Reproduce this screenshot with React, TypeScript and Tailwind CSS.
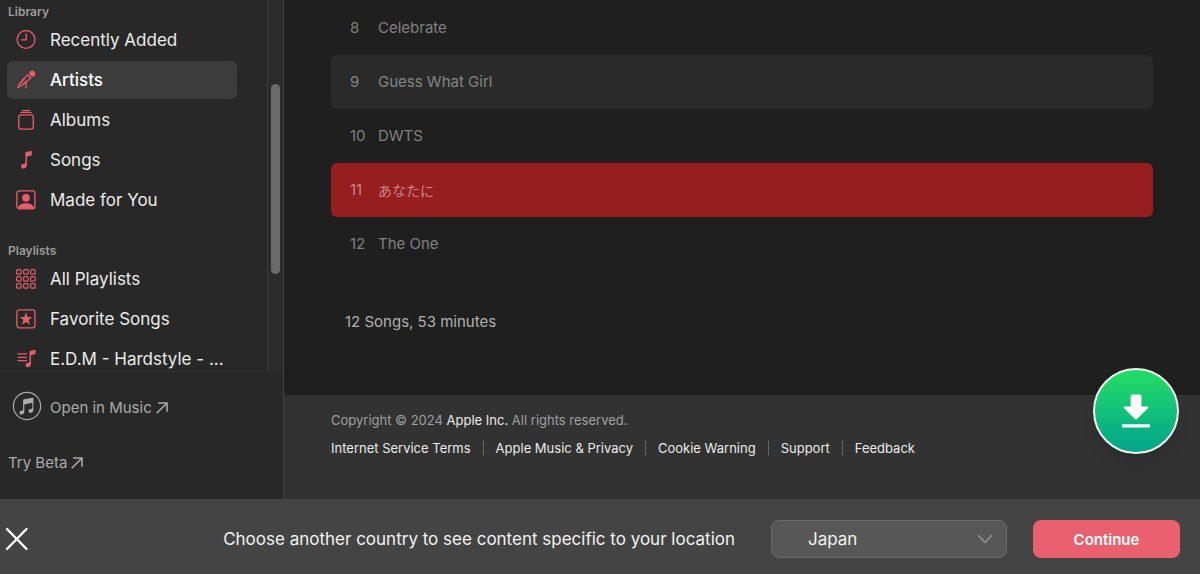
import type { ReactNode } from 'react';

interface NavItem {
  label: string;
  icon: ReactNode;
  active?: boolean;
}

interface Track {
  number: number;
  title: string;
  variant?: 'striped' | 'selected';
}

function ClockIcon() {
  return (
    <svg viewBox="0 0 20 20" className="size-5" fill="none" stroke="currentColor" strokeWidth="1.3">
      <circle cx="10" cy="9.5" r="8.9" />
      <path d="M10.2 3.8v6H5.4" strokeLinecap="round" strokeLinejoin="round" />
    </svg>
  );
}

function MicIcon() {
  return (
    <svg viewBox="0 0 20 20" className="size-5" fill="none" stroke="currentColor" strokeLinecap="round" strokeLinejoin="round">
      <path d="M11.300 4.900 3 14.600 1.900 17.500l2.900-1.200 10-8.200z" strokeWidth="1.200" />
      <path d="M10 11.500v6.300M10 11.500 7.500 13.800" strokeWidth="1.300" />
      <path d="m8 8.800-4.600 5.600" strokeWidth="1.600" />
      <path d="M12.200 3.900c.1 2.100 1.500 3.700 3.700 4l-1.300.9-3.300-3.400z" fill="currentColor" stroke="none" />
      <path d="M13.300 2.400a3.200 3.200 0 1 1 4 4.400c-2.300.3-4.300-1.900-4-4.400z" fill="currentColor" stroke="none" />
    </svg>
  );
}

function AlbumIcon() {
  return (
    <svg viewBox="0 0 20 20" className="size-5" fill="none" stroke="currentColor" strokeWidth="1.3" strokeLinecap="round">
      <rect x="2.7" y="4.900" width="14.6" height="14.300" rx="2.4" />
      <path d="M4.600 2.500h10.800M6.300.6h7.400" strokeWidth="1.1" />
    </svg>
  );
}

function NoteIcon() {
  return (
    <svg viewBox="0 0 20 20" className="size-5" fill="currentColor">
      <path d="M15.8 1.3v3.6c0 .4-.2.6-.6.7l-3.9.8c-.3.1-.4.2-.4.5v8.2c0 1.9-1.2 3.3-3.1 3.5-1.600.2-2.800-.7-2.800-2.100 0-1.300.8-2.100 2.200-2.400l1.500-.4c.5-.1.700-.4.700-.9V3c0-.5.200-.8.700-.9l4.900-1.200c.5-.1.800 0 .8.4z" />
    </svg>
  );
}

function PersonIcon() {
  return (
    <svg viewBox="0 0 20 20" className="size-5">
      <rect x=".9" y=".8" width="18" height="18" rx="2.2" fill="none" stroke="currentColor" strokeWidth="1.3" />
      <circle cx="10" cy="7.900" r="3.800" fill="currentColor" />
      <path d="M2 17.900c1-3.300 4.200-4.700 8-4.700s7 1.400 8 4.700c0 .6-.4.900-1 .9H3c-.6 0-1-.3-1-.9z" fill="currentColor" />
    </svg>
  );
}

function GridIcon() {
  const cells = [2.9, 9.9, 16.9];
  return (
    <svg viewBox="0 0 20 20" className="size-5" fill="none" stroke="currentColor" strokeWidth="1.2">
      {cells.map((y) =>
        cells.map((x) => <rect key={`${x}-${y}`} x={x - 2.3} y={y - 2.3} width="4.6" height="4.6" rx="1.3" />),
      )}
    </svg>
  );
}

function StarIcon() {
  return (
    <svg viewBox="0 0 20 20" className="size-5">
      <rect x=".9" y=".8" width="18" height="18" rx="2.2" fill="none" stroke="currentColor" strokeWidth="1.3" />
      <path d="m10 3.200 1.700 4.800h4.700l-3.800 3 1.400 4.800-4-2.900-4 2.900 1.400-4.800-3.800-3h4.700z" fill="currentColor" />
    </svg>
  );
}

function PlaylistIcon() {
  return (
    <svg viewBox="0 0 20 20" className="size-5">
      <path d="M2 4.900h8.500M2 8.300h8.500M2 11.700h8.500" stroke="currentColor" strokeWidth="1.200" strokeLinecap="round" />
      <path d="M19.500 1.200v3.400c0 .4-.2.600-.6.700l-3.500.8c-.3.100-.4.200-.4.500v8.200c0 1.900-1 3.200-2.700 3.400-1.600.2-2.800-.6-2.800-2 0-1.200.8-2 2.200-2.300l1.200-.3c.5-.1.700-.4.700-.9V2.800c0-.5.200-.8.700-.9l4.400-1.100c.5-.1.800 0 .8.400z" fill="currentColor" />
    </svg>
  );
}

function ArrowOutIcon() {
  return (
    <svg viewBox="0 0 12 12" className="size-3" fill="none" stroke="currentColor" strokeWidth="1.600">
      <path d="M2.100 1h8.900v8.700M10.800 1.200.7 11.300" />
    </svg>
  );
}

function MusicBadgeIcon() {
  return (
    <svg viewBox="0 0 30 30" className="size-[30px]">
      <circle cx="15" cy="15" r="13.600" fill="none" stroke="currentColor" strokeWidth="1.200" />
      <path d="M21.400 7.400v11.400c0 1.900-1.200 3-2.700 3.100-1.300.1-2.200-.6-2.200-1.800 0-1 .7-1.700 1.800-2l1.300-.3c.5-.1.700-.3.700-.8v-5.200l-8 1.700v7c0 1.900-1.200 3-2.700 3.100-1.300.1-2.200-.6-2.200-1.800 0-1 .7-1.700 1.800-2l1.300-.3c.4-.1.600-.4.600-.8V9.200c0-.6.200-.9.800-1l8.700-1.500c.5-.1.800.1.800.7z" fill="currentColor" />
    </svg>
  );
}

const library: NavItem[] = [
  { label: 'Recently Added', icon: <ClockIcon /> },
  { label: 'Artists', icon: <MicIcon />, active: true },
  { label: 'Albums', icon: <AlbumIcon /> },
  { label: 'Songs', icon: <NoteIcon /> },
  { label: 'Made for You', icon: <PersonIcon /> },
];

const playlists: NavItem[] = [
  { label: 'All Playlists', icon: <GridIcon /> },
  { label: 'Favorite Songs', icon: <StarIcon /> },
  { label: 'E.D.M - Hardstyle - ...', icon: <PlaylistIcon /> },
];

const tracks: Track[] = [
  { number: 8, title: 'Celebrate' },
  { number: 9, title: 'Guess What Girl', variant: 'striped' },
  { number: 10, title: 'DWTS' },
  { number: 11, title: 'あなたに', variant: 'selected' },
  { number: 12, title: 'The One' },
];

const footerLinks = ['Internet Service Terms', 'Apple Music & Privacy', 'Cookie Warning', 'Support', 'Feedback'];

function NavSection({ title, items }: { title: string; items: NavItem[] }) {
  return (
    <section>
      <h2 className="px-2 text-[12px] leading-[18px] font-semibold text-[#9c9c9c]">{title}</h2>
      <ul className="flex flex-col gap-[2px] pl-[7px] pr-[30px]">
        {items.map((item) => (
          <li key={item.label}>
            <a
              href="#"
              className={`flex h-[38px] items-center gap-[14px] rounded-md pl-[9px] text-[17px] whitespace-nowrap ${
                item.active ? 'bg-[#3c3c3c] font-medium text-white' : 'text-[#ebebeb]'
              }`}
            >
              <span className="text-[#e85d6b]">{item.icon}</span>
              <span className="pt-[2px]">{item.label}</span>
            </a>
          </li>
        ))}
      </ul>
    </section>
  );
}

function Sidebar() {
  return (
    <aside className="flex w-[284px] shrink-0 flex-col border-r border-[#444444] bg-[#282828]">
      <div className="flex min-h-0 flex-1">
        <nav className="flex min-w-0 flex-1 flex-col gap-[23px] overflow-hidden pt-[3px]">
          <NavSection title="Library" items={library} />
          <NavSection title="Playlists" items={playlists} />
        </nav>
        {/* Scroll track */}
        <div className="w-4 shrink-0 border-l border-[#393939] bg-[#2b2b2b] px-[3px] pt-[84px]">
          <div className="h-[190px] w-[9px] rounded-full bg-[#6b6b6b]" />
        </div>
      </div>
      <div className="flex flex-col gap-8 border-t border-[#2d2d2d] pt-[19px] pb-[26px] text-[15px] text-[#ababab]">
        <a href="#" className="flex items-center gap-2 pl-3">
          <MusicBadgeIcon />
          <span className="flex items-center gap-1 pt-1">
            Open in Music <ArrowOutIcon />
          </span>
        </a>
        <a href="#" className="flex h-5 items-center gap-1 pl-2">
          Try Beta <ArrowOutIcon />
        </a>
      </div>
    </aside>
  );
}

function TrackRow({ track }: { track: Track }) {
  return (
    <li
      className={`flex h-[54px] items-center rounded-md px-[19px] text-[15px] ${getTrackColor(track.variant)}`}
    >
      <span className="w-7">{track.number}</span>
      <span className={track.variant === 'selected' ? 'text-[14px]' : ''}>{track.title}</span>
    </li>
  );
}

function getTrackColor(variant?: Track['variant']): string {
  if (variant === 'striped') return 'bg-[#2a2a2a] text-[#858585]';
  if (variant === 'selected') return 'bg-[#961e1e] text-[#c98787]';
  return 'text-[#808080]';
}

function Footer() {
  return (
    <footer className="mt-auto h-[104px] bg-[#323232] px-[47px] pt-4 text-[13px] leading-[18px]">
      <p className="text-[#a0a0a0]">
        Copyright © 2024 <a href="#" className="text-[#ebebeb]">Apple Inc.</a> All rights reserved.
      </p>
      <ul className="mt-[10px] flex divide-x divide-[#666666] text-[#ebebeb]">
        {footerLinks.map((link) => (
          <li key={link} className="my-[2px] flex items-center px-3 leading-[14px] first:pl-0">
            <a href="#">{link}</a>
          </li>
        ))}
      </ul>
    </footer>
  );
}

function CountryBar() {
  return (
    <div className="flex shrink-0 items-center bg-[#444444] pt-[21px] pr-5 pb-4 pl-[5px]">
      <button type="button" aria-label="Close" className="text-white">
        <svg viewBox="0 0 24 24" className="size-6" fill="none" stroke="currentColor" strokeWidth="2.400" strokeLinecap="round">
          <path d="m2 2 19.500 20M21.500 2 2 22" />
        </svg>
      </button>
      <label htmlFor="country" className="ml-auto pt-[2px] pr-9 text-[17px] text-[#f2f2f2]">
        Choose another country to see content specific to your location
      </label>
      <div className="relative w-[236px]">
        <select
          id="country"
          className="h-[38px] w-full appearance-none rounded-lg border border-[#6b6b6b] bg-[#575757] pt-[2px] pl-9 text-[17px] text-[#f2f2f2]"
        >
          <option>Japan</option>
        </select>
        <svg
          viewBox="0 0 16 10"
          className="pointer-events-none absolute top-[14px] right-[14px] h-[10px] w-4"
          fill="none"
          stroke="#949494"
          strokeWidth="1.400"
          strokeLinecap="round"
          strokeLinejoin="round"
        >
          <path d="m1.500 1.500 6.500 7 6.500-7" />
        </svg>
      </div>
      <button type="button" className="ml-[26px] h-[38px] w-[147px] rounded-lg bg-[#e9616e] pt-[2px] text-[15px] font-semibold text-white">
        Continue
      </button>
    </div>
  );
}

export default function App() {
  return (
    <div className="relative flex h-screen flex-col overflow-hidden bg-[#1f1f1f] font-['Inter','Noto_Sans_CJK_JP',sans-serif]">
      <div className="flex min-h-0 flex-1">
        <Sidebar />
        <main className="flex min-w-0 flex-1 flex-col">
          <div className="px-[47px] pt-px">
            <ol>
              {tracks.map((track) => (
                <TrackRow key={track.number} track={track} />
              ))}
            </ol>
            <p className="mt-10 pl-[14px] text-[15px] leading-[22px] text-[#b0b0b0]">12 Songs, 53 minutes</p>
          </div>
          <Footer />
        </main>
      </div>
      <CountryBar />
      {/* Floating download button */}
      <button
        type="button"
        aria-label="Download"
        className="absolute right-[21px] bottom-[120px] flex size-[86px] items-center justify-center rounded-full border-2 border-[#f2f2f2] bg-linear-to-b from-[#25de62] to-[#02a38a] text-white shadow-lg"
      >
        <svg viewBox="0 0 28 34" className="h-[34px] w-7" fill="currentColor">
          <path d="M8.600 2.500c0-1.200.8-2 2-2h6.800c1.200 0 2 .8 2 2v10h6.200c.8 0 1.100.9.500 1.500L15 25.100c-.6.600-1.400.600-2 0L1.900 14c-.6-.6-.3-1.500.5-1.500h6.200z" />
          <rect x="0" y="30.300" width="28" height="3.300" rx=".6" />
        </svg>
      </button>
    </div>
  );
}
